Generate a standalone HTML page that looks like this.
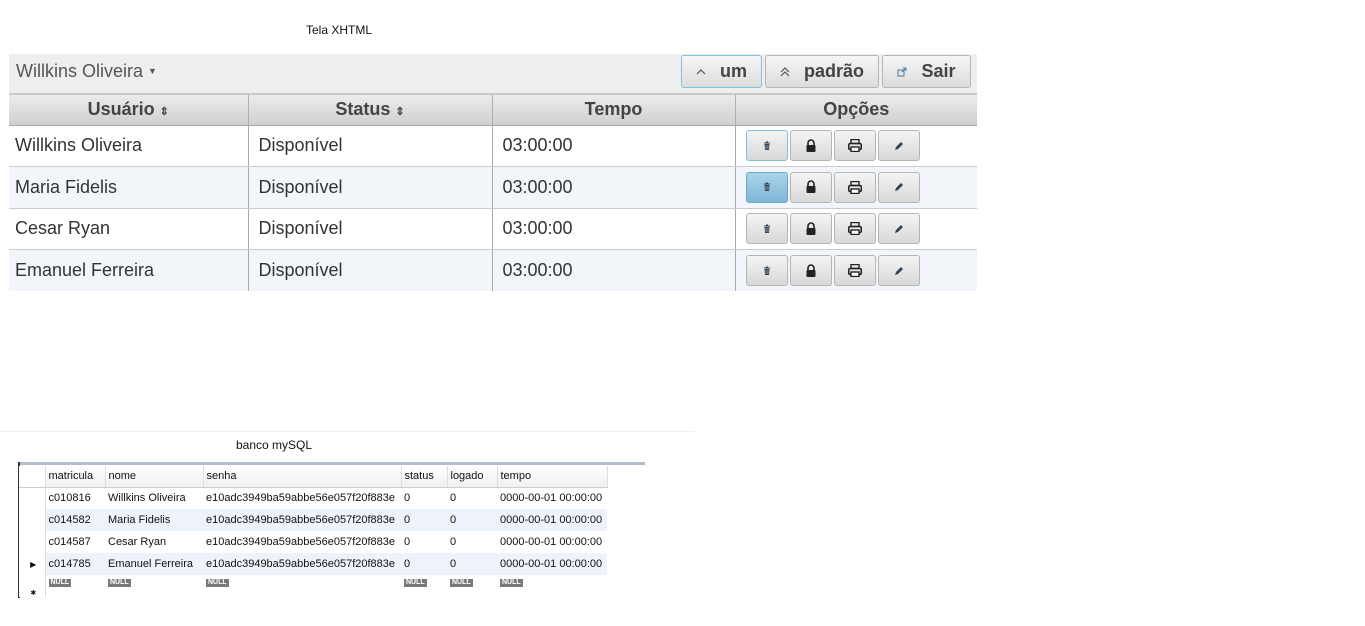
<!DOCTYPE html>
<html><head><meta charset="utf-8"><style>
*{margin:0;padding:0;box-sizing:border-box}
body{width:1365px;height:626px;background:#fff;font-family:"Liberation Sans",Arial,sans-serif;position:relative;overflow:hidden}
.abs{position:absolute}
.cap{font-size:12px;color:#111}
.bar{left:9px;top:54px;width:968px;height:41px;background:#eeeeee;border-bottom:2px solid #c8c8c8}
.btn{position:absolute;top:55px;height:33px;border:1px solid #b5b5b5;border-radius:3px;background:linear-gradient(#f6f6f6,#dcdcdc);font-weight:bold;font-size:18px;color:#444;display:flex;align-items:center;justify-content:center;gap:14px}
table.m{position:absolute;left:9px;top:95px;width:968px;border-collapse:collapse;font-size:18px;color:#333}
table.m th{height:30px;background:linear-gradient(#ececec,#cfcfcf);border-right:1px solid #b0b0b0;border-bottom:1px solid #aaa;font-weight:bold;color:#444}
table.m td{border-right:1px solid #aaa;border-bottom:1px solid #ccc;padding-left:10px;height:41.5px}
table.m td:first-child{padding-left:6px}
table.m tr:nth-child(odd) td{background:#f2f6fa}
table.m th:last-child,table.m td:last-child{border-right:none}
table.m tr:last-child td{border-bottom:none}
.ob{display:inline-flex;align-items:center;justify-content:center;width:42px;height:31px;border:1px solid #b5b5b5;border-radius:3px;background:linear-gradient(#f4f4f4,#d8d8d8);margin-right:2px;vertical-align:middle}
.ob.a{border-color:#7ec3d9}
.ob.b{background:linear-gradient(#a9d3ea,#7fb7d6);border-color:#6fa8c8}
table.s{position:absolute;left:19px;top:466px;border-collapse:collapse;font-size:11px;color:#111}
table.s td{height:22px;padding-left:3px;white-space:nowrap}
table.s tr.h td{height:21px;background:linear-gradient(#fff,#f0f0f0);border-right:1px solid #ddd;border-bottom:1px solid #ccc}
table.s tr.alt td{background:#eef2fb}
table.s td.rn{background:#fff!important;border-right:1px solid #ddd}
.null{display:inline-block;background:#7a7a7a;color:#fff;font-size:7px;padding:0 2px;line-height:8px;font-weight:bold}
</style></head><body>
<svg width="0" height="0" style="position:absolute">
<defs>
<g id="tr"><path d="M2 2h6M4 1h2" stroke="#345" stroke-width="1"/><path d="M2.5 3h5l-.5 6h-4z" fill="#345"/><path d="M4 4v4M6 4v4" stroke="#ccd" stroke-width=".6"/></g>
<g id="lk"><path d="M3 6V4a3 3 0 0 1 6 0v2" fill="none" stroke="#222" stroke-width="1.6"/><rect x="1.5" y="6" width="9" height="7" rx="1" fill="#222"/></g>
<g id="pr"><rect x="3" y="0.5" width="8" height="4" fill="none" stroke="#222" stroke-width="1.4"/><rect x="0.7" y="4.5" width="12.6" height="6" rx="1.5" fill="none" stroke="#222" stroke-width="1.6"/><rect x="3" y="8" width="8" height="4.5" fill="#fff" stroke="#222" stroke-width="1.4"/></g>
<g id="pn"><path d="M1 9l1-3 5-5 2 2-5 5z" fill="#345"/></g>
</defs></svg>
<div class="abs cap" style="left:306px;top:23px">Tela XHTML</div>
<div class="abs bar"></div>
<div class="abs" style="left:16px;top:61px;font-size:18px;color:#555">Willkins Oliveira <span style="font-size:9px;position:relative;top:-3px">▼</span></div>
<div class="btn" style="left:681px;width:81px;border-color:#7ec3d9"><svg width="10" height="8"><path d="M1 6l4-4 4 4" fill="none" stroke="#555" stroke-width="1.2"/></svg>um</div>
<div class="btn" style="left:765px;width:114px"><svg width="10" height="10"><path d="M1 5l4-4 4 4M1 9l4-4 4 4" fill="none" stroke="#555" stroke-width="1.2"/></svg>padrão</div>
<div class="btn" style="left:882px;width:89px"><svg width="10" height="10"><rect x="1" y="3" width="6" height="6" fill="none" stroke="#4a7a9a"/><path d="M5 5l4-4M6 1h3v3" fill="none" stroke="#4a7a9a"/></svg>Sair</div>
<table class="m">
<tr><th style="width:239px">Usuário <span style="font-size:11px">⇕</span></th><th style="width:244px">Status <span style="font-size:11px">⇕</span></th><th style="width:243px">Tempo</th><th>Opções</th></tr>
<tr><td>Willkins Oliveira</td><td>Disponível</td><td>03:00:00</td><td><span class="ob a"><svg width="10" height="10"><use href="#tr"/></svg></span><span class="ob"><svg width="12" height="14"><use href="#lk"/></svg></span><span class="ob"><svg width="14" height="13"><use href="#pr"/></svg></span><span class="ob"><svg width="10" height="10"><use href="#pn"/></svg></span></td></tr>
<tr><td>Maria Fidelis</td><td>Disponível</td><td>03:00:00</td><td><span class="ob b"><svg width="10" height="10"><use href="#tr"/></svg></span><span class="ob"><svg width="12" height="14"><use href="#lk"/></svg></span><span class="ob"><svg width="14" height="13"><use href="#pr"/></svg></span><span class="ob"><svg width="10" height="10"><use href="#pn"/></svg></span></td></tr>
<tr><td>Cesar Ryan</td><td>Disponível</td><td>03:00:00</td><td><span class="ob"><svg width="10" height="10"><use href="#tr"/></svg></span><span class="ob"><svg width="12" height="14"><use href="#lk"/></svg></span><span class="ob"><svg width="14" height="13"><use href="#pr"/></svg></span><span class="ob"><svg width="10" height="10"><use href="#pn"/></svg></span></td></tr>
<tr><td>Emanuel Ferreira</td><td>Disponível</td><td>03:00:00</td><td><span class="ob"><svg width="10" height="10"><use href="#tr"/></svg></span><span class="ob"><svg width="12" height="14"><use href="#lk"/></svg></span><span class="ob"><svg width="14" height="13"><use href="#pr"/></svg></span><span class="ob"><svg width="10" height="10"><use href="#pn"/></svg></span></td></tr>
</table>
<div class="abs" style="left:0;top:431px;width:695px;height:1px;background:#f0f0f0"></div>
<div class="abs cap" style="left:236px;top:438px">banco mySQL</div>
<div class="abs" style="left:18px;top:462px;width:627px;height:3px;background:#b4bccb"></div>
<div class="abs" style="left:18px;top:462px;width:2px;height:136px;background:#333"></div>
<table class="s">
<tr class="h"><td class="rn" style="width:26px"></td><td style="width:60px">matricula</td><td style="width:98px">nome</td><td style="width:198px">senha</td><td style="width:46px">status</td><td style="width:50px">logado</td><td style="width:110px">tempo</td></tr>
<tr><td class="rn"></td><td>c010816</td><td>Willkins Oliveira</td><td>e10adc3949ba59abbe56e057f20f883e</td><td>0</td><td>0</td><td>0000-00-01 00:00:00</td></tr>
<tr class="alt"><td class="rn"></td><td>c014582</td><td>Maria Fidelis</td><td>e10adc3949ba59abbe56e057f20f883e</td><td>0</td><td>0</td><td>0000-00-01 00:00:00</td></tr>
<tr><td class="rn"></td><td>c014587</td><td>Cesar Ryan</td><td>e10adc3949ba59abbe56e057f20f883e</td><td>0</td><td>0</td><td>0000-00-01 00:00:00</td></tr>
<tr class="alt"><td class="rn" style="font-size:8px;text-align:center">▶</td><td>c014785</td><td>Emanuel Ferreira</td><td>e10adc3949ba59abbe56e057f20f883e</td><td>0</td><td>0</td><td>0000-00-01 00:00:00</td></tr>
<tr><td class="rn" style="height:12px;font-size:7px;text-align:center;vertical-align:bottom">✱</td><td style="height:12px;vertical-align:top"><span class="null">NULL</span></td><td style="vertical-align:top"><span class="null">NULL</span></td><td style="vertical-align:top"><span class="null">NULL</span></td><td style="vertical-align:top"><span class="null">NULL</span></td><td style="vertical-align:top"><span class="null">NULL</span></td><td style="vertical-align:top"><span class="null">NULL</span></td></tr>
</table>
</body></html>
